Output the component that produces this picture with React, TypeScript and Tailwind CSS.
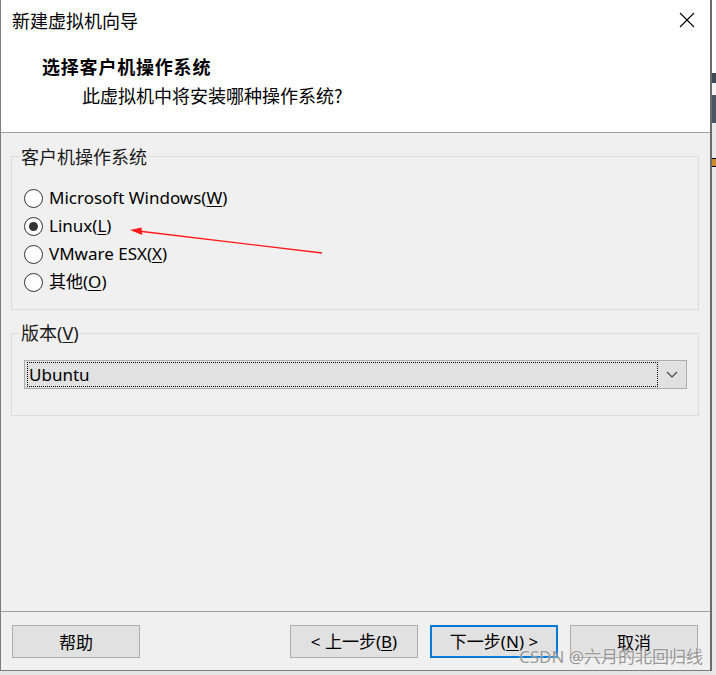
import React from "react";

const F = "font-['Noto_Sans','Noto_Sans_CJK_SC',sans-serif]";
const CJK = "font-['Noto_Sans_CJK_SC',sans-serif]";

function Radio({ checked, children }: { checked?: boolean; children: React.ReactNode }) {
  return (
    <div className="h-[28px] flex items-center">
      <div className="w-[19px] h-[19px] rounded-full border border-[#333333] bg-white flex items-center justify-center">
        {checked && <div className="w-[9px] h-[9px] rounded-full bg-[#333333]" />}
      </div>
      <span className={`ml-[6px] text-[17px] leading-[24px] text-black ${F}`}>{children}</span>
    </div>
  );
}

function Btn({ children, primary }: { children: React.ReactNode; primary?: boolean }) {
  return (
    <div
      className={`w-[128px] h-[33px] flex items-center justify-center bg-[#e1e1e1] text-[17px] text-black ${F} ${
        primary ? "border-2 border-[#0078d7]" : "border border-[#adadad]"
      }`}
    >
      {children}
    </div>
  );
}

export default function App() {
  return (
    <div className="relative w-[716px] h-[675px] bg-[#e4e4e4] flex overflow-hidden">
      <div className="w-[712px] h-[671px] flex flex-col border-l border-r-2 border-b border-l-[#7d7d7d] border-r-[#6b6b6b] border-b-[#7d7d7d] bg-[#f0f0f0]">
        {/* header */}
        <div className="h-[133px] bg-white border-b border-[#a0a0a0] flex flex-col pt-[8px] pl-[11px]">
          <div className="flex items-center justify-between h-[24px] pr-[15px]">
            <span className={`text-[18px] leading-[24px] text-black ${CJK}`}>新建虚拟机向导</span>
            <svg width="16" height="16" viewBox="0 0 16 16" className="block">
              <path d="M1 1 L15 15 M15 1 L1 15" stroke="#000" strokeWidth="1.1" fill="none" />
            </svg>
          </div>
          <div className={`mt-[22px] ml-[30px] text-[18px] leading-[24px] font-bold tracking-[0.8px] text-black ${CJK}`}>
            选择客户机操作系统
          </div>
          <div className={`mt-[5px] ml-[70px] text-[18px] leading-[24px] text-black ${CJK}`}>
            此虚拟机中将安装哪种操作系统?
          </div>
        </div>

        {/* body */}
        <div className="flex-1 flex flex-col pl-[10px]">
          <fieldset className="mt-[11px] w-[688px] border border-[#dcdcdc] px-[8px] pt-[16px] pb-[13px]">
            <legend className={`px-[1px] text-[18px] leading-[24px] text-[#1a1a1a] ${CJK}`}>客户机操作系统</legend>
            <div className="flex flex-col pl-[4px]">
              <Radio>
                Microsoft Windows(<span className="underline underline-offset-2">W</span>)
              </Radio>
              <Radio checked>
                Linux(<span className="underline underline-offset-2">L</span>)
              </Radio>
              <Radio>
                VMware ESX(<span className="underline underline-offset-2">X</span>)
              </Radio>
              <Radio>
                其他(<span className="underline underline-offset-2">O</span>)
              </Radio>
            </div>
          </fieldset>

          <fieldset className="mt-[11px] w-[688px] border border-[#dcdcdc] px-[8px] pt-[15px] pb-[26px]">
            <legend className={`px-[1px] text-[18px] leading-[24px] text-[#1a1a1a] ${F}`}>
              版本(<span className="underline underline-offset-2">V</span>)
            </legend>
            <div className="ml-[4px] w-[663px] h-[29px] bg-[#e1e1e1] border border-[#adadad] flex items-center pl-[2px]">
              <div className={`w-[631px] h-[25px] border border-dotted border-black flex items-center pl-[1px] text-[17px] text-black ${F}`}>
                Ubuntu
              </div>
              <div className="flex-1 flex items-center justify-center">
                <svg width="12" height="7" viewBox="0 0 12 7" className="block">
                  <polyline points="1,1 6,6 11,1" stroke="#444" strokeWidth="1.1" fill="none" />
                </svg>
              </div>
            </div>
          </fieldset>
        </div>

        {/* footer */}
        <div className="h-[59px] border-t border-[#a0a0a0] flex items-start pt-[13px] pl-[11px] pr-[12px]">
          <Btn>
            <span className={CJK}>帮助</span>
          </Btn>
          <div className="ml-auto flex gap-[12px]">
            <Btn>
              &lt; 上一步(<span className="underline underline-offset-2">B</span>)
            </Btn>
            <Btn primary>
              下一步(<span className="underline underline-offset-2">N</span>) &gt;
            </Btn>
            <Btn>
              <span className={CJK}>取消</span>
            </Btn>
          </div>
        </div>
      </div>

      {/* background window strip at right */}
      <div className="flex-1 flex flex-col">
        <div className="h-[73px] bg-white" />
        <div className="h-[10px] bg-[#3e4a55]" />
        <div className="h-[12px] bg-[#f2f2f2]" />
        <div className="h-[28px] bg-[#4a5662]" />
        <div className="h-[35px] bg-[#e8e8e8]" />
        <div className="h-[9px] bg-[#c88a2a] border-y border-black" />
        <div className="flex-1 bg-[#e8e8e8]" />
      </div>

      {/* red arrow annotation */}
      <svg className="absolute left-0 top-0 pointer-events-none" width="716" height="675" viewBox="0 0 716 675">
        <line x1="322" y1="253" x2="138" y2="231" stroke="#ff1a1a" strokeWidth="1.3" />
        <polygon points="130,230 141.5,227.5 142.3,235" fill="#ff1a1a" />
      </svg>

      {/* watermark */}
      <div
        className={`absolute left-[519px] top-[646px] text-[17px] leading-[22px] text-[#8f8f8f] opacity-90 [text-shadow:0_0_2px_#ffffff] ${F}`}
      >
        CSDN @六月的北回归线
      </div>
    </div>
  );
}
